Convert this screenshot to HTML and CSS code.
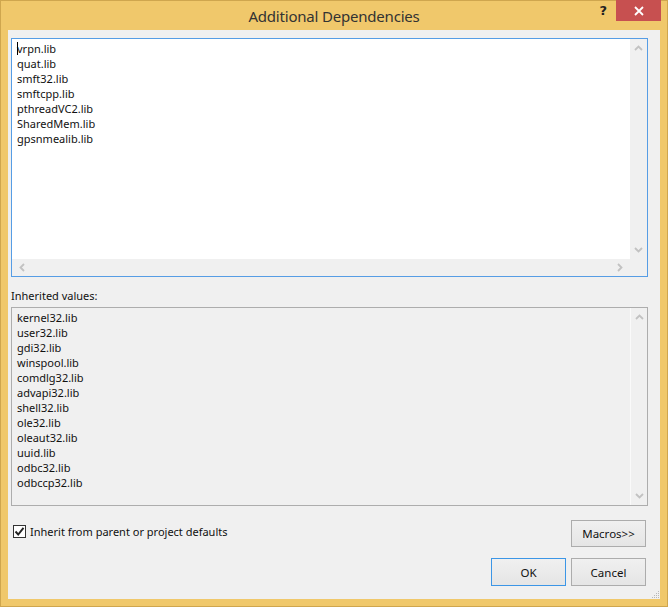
FILE: index.html
```html
<!DOCTYPE html>
<html>
<head>
<meta charset="utf-8">
<link rel="stylesheet" href="styles.css">
</head>
<body>
<div class="window">
  <div class="titlebar">
    <div class="title">Additional Dependencies</div>
    <div class="help">?</div>
    <div class="close">
      <svg width="10" height="10" viewBox="0 0 10 10"><path d="M1 1 L9 9 M9 1 L1 9" stroke="#fff" stroke-width="1.8"/></svg>
    </div>
  </div>
  <div class="client">
    <div class="editbox">
      <div class="lines active">
        <div class="line first">vrpn.lib</div>
        <div class="line">quat.lib</div>
        <div class="line">smft32.lib</div>
        <div class="line">smftcpp.lib</div>
        <div class="line">pthreadVC2.lib</div>
        <div class="line">SharedMem.lib</div>
        <div class="line">gpsnmealib.lib</div>
      </div>
      <div class="vscroll">
        <svg class="arrow" width="9" height="6" viewBox="0 0 9 6"><polyline points="1,5 4.5,1.5 8,5" fill="none" stroke="#c2c2c2" stroke-width="1.8"/></svg>
        <svg class="arrow" width="9" height="6" viewBox="0 0 9 6"><polyline points="1,1 4.5,4.5 8,1" fill="none" stroke="#c2c2c2" stroke-width="1.8"/></svg>
      </div>
      <div class="hscroll">
        <svg class="arrow" width="6" height="9" viewBox="0 0 6 9"><polyline points="5,1 1.5,4.5 5,8" fill="none" stroke="#c2c2c2" stroke-width="1.8"/></svg>
        <svg class="arrow" width="6" height="9" viewBox="0 0 6 9"><polyline points="1,1 4.5,4.5 1,8" fill="none" stroke="#c2c2c2" stroke-width="1.8"/></svg>
      </div>
      <div class="corner"></div>
    </div>

    <div class="label">Inherited values:</div>

    <div class="listbox">
      <div class="lines">
        <div class="line">kernel32.lib</div>
        <div class="line">user32.lib</div>
        <div class="line">gdi32.lib</div>
        <div class="line">winspool.lib</div>
        <div class="line">comdlg32.lib</div>
        <div class="line">advapi32.lib</div>
        <div class="line">shell32.lib</div>
        <div class="line">ole32.lib</div>
        <div class="line">oleaut32.lib</div>
        <div class="line">uuid.lib</div>
        <div class="line">odbc32.lib</div>
        <div class="line">odbccp32.lib</div>
      </div>
      <div class="vscroll light">
        <svg class="arrow" width="9" height="6" viewBox="0 0 9 6"><polyline points="1,5 4.5,1.5 8,5" fill="none" stroke="#c2c2c2" stroke-width="1.8"/></svg>
        <svg class="arrow" width="9" height="6" viewBox="0 0 9 6"><polyline points="1,1 4.5,4.5 8,1" fill="none" stroke="#c2c2c2" stroke-width="1.8"/></svg>
      </div>
    </div>

    <div class="bottom">
      <div class="row1">
        <label class="check">
          <span class="box">
            <svg width="11" height="11" viewBox="0 0 11 11"><polyline points="1.5,5.5 4.2,8.5 9.5,1.8" fill="none" stroke="#222" stroke-width="1.9"/></svg>
          </span>
          <span>Inherit from parent or project defaults</span>
        </label>
        <button class="btn macros">Macros&gt;&gt;</button>
      </div>
      <div class="row2">
        <button class="btn default">OK</button>
        <button class="btn">Cancel</button>
      </div>
    </div>
    <svg class="grip" width="9" height="9" viewBox="0 0 9 9">
      <g fill="#b8b8b8">
        <rect x="7" y="1" width="1" height="1"/>
        <rect x="5" y="3" width="1" height="1"/><rect x="7" y="3" width="1" height="1"/>
        <rect x="3" y="5" width="1" height="1"/><rect x="5" y="5" width="1" height="1"/><rect x="7" y="5" width="1" height="1"/>
        <rect x="1" y="7" width="1" height="1"/><rect x="3" y="7" width="1" height="1"/><rect x="5" y="7" width="1" height="1"/><rect x="7" y="7" width="1" height="1"/>
      </g>
    </svg>
  </div>
</div>
</body>
</html>
```

FILE: styles.css
```css
* { box-sizing: border-box; }
html, body { margin: 0; padding: 0; }
body {
  width: 668px;
  height: 607px;
  font-family: "Noto Sans", "Open Sans", sans-serif;
  font-size: 11px;
  color: #111;
  overflow: hidden;
}
.window {
  width: 668px;
  height: 607px;
  background: #f0c86b;
  border: 1px solid #cfa64e;
  display: flex;
  flex-direction: column;
  padding: 0 7px 7px 7px;
}
.titlebar {
  height: 29px;
  position: relative;
  display: flex;
  align-items: flex-start;
  justify-content: center;
}
.title {
  font-family: "Noto Sans", sans-serif;
  font-size: 15px;
  color: #333;
  line-height: 30px;
  letter-spacing: -0.2px;
}
.help {
  position: absolute;
  right: 53px;
  top: 2px;
  font-family: "DejaVu Sans", sans-serif;
  font-weight: bold;
  font-size: 13px;
  color: #222;
}
.close {
  position: absolute;
  right: -1px;
  top: -1px;
  width: 45px;
  height: 21px;
  background: #c75050;
  display: flex;
  align-items: center;
  justify-content: center;
}
.client {
  flex: 1;
  background: #f0f0f0;
  position: relative;
  display: flex;
  flex-direction: column;
  padding: 8px 12px 0 3px;
}
.editbox {
  height: 239px;
  border: 1px solid #569de5;
  display: grid;
  grid-template-columns: 1fr 17px;
  grid-template-rows: 1fr 17px;
  background: #fff;
}
.lines {
  padding: 2px 5px;
  line-height: 15px;
}
.line { white-space: nowrap; }
.line.first { position: relative; }
.line.first::before {
  content: "";
  position: absolute;
  left: 0;
  top: 1px;
  width: 1px;
  height: 13px;
  background: #000;
}
.vscroll {
  background: #f0f0f0;
  display: flex;
  flex-direction: column;
  justify-content: space-between;
  align-items: center;
  padding: 6px 0 6px 0;
}
.hscroll {
  background: #f0f0f0;
  display: flex;
  justify-content: space-between;
  align-items: center;
  padding: 0 7px 0 7px;
}
.corner { background: #f0f0f0; }
.label {
  margin-top: 11px;
  height: 19px;
  line-height: 15px;
  color: #111;
}
.listbox {
  height: 199px;
  border: 1px solid #adadad;
  display: grid;
  grid-template-columns: 1fr 17px;
  background: #f0f0f0;
}
.vscroll.light {
  border-left: 1px solid #fafafa;
}
.bottom {
  display: flex;
  flex-direction: column;
  padding-top: 14px;
  padding-right: 2px;
}
.row1 {
  display: flex;
  justify-content: space-between;
  align-items: flex-start;
}
.check {
  display: flex;
  align-items: center;
  gap: 4px;
  margin-left: 2px;
  margin-top: 4px;
  line-height: 15px;
}
.box {
  width: 13px;
  height: 13px;
  border: 1px solid #333;
  background: #fff;
  display: flex;
  align-items: center;
  justify-content: center;
}
.row2 {
  display: flex;
  justify-content: flex-end;
  gap: 5px;
  margin-top: 11px;
}
.btn {
  width: 75px;
  height: 28px;
  font-family: "Noto Sans", "Open Sans", sans-serif;
  font-size: 11.5px;
  color: #111;
  background: linear-gradient(#f0f0f0, #e5e5e5);
  border: 1px solid #acacac;
  padding: 0;
  margin: 0;
}
.btn.macros { height: 27px; }
.btn.default { border-color: #3c96e6; }
.grip {
  position: absolute;
  right: 0;
  bottom: 0;
}
```
